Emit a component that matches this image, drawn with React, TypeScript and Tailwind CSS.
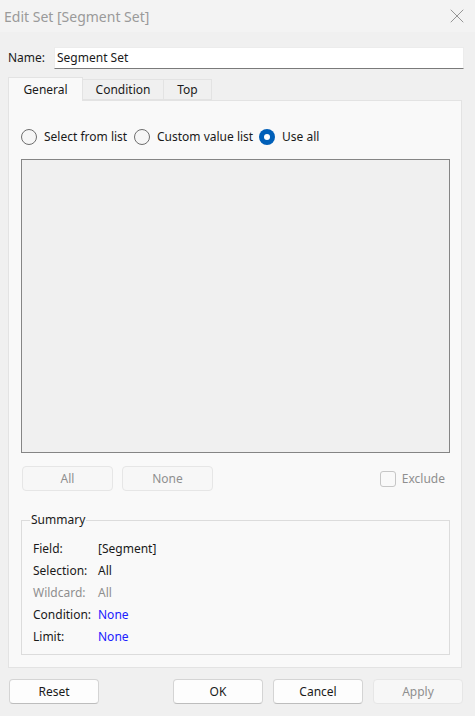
import { X } from "lucide-react";

const font = { fontFamily: '"Noto Sans", "Open Sans", sans-serif' };

function Radio({ label, checked, width }: { label: string; checked?: boolean; width?: string }) {
  return (
    <div className={`flex items-center gap-[7px] ${width ?? ""}`}>
      {checked ? (
        <span className="flex h-[16px] w-[16px] items-center justify-center rounded-full bg-[#005fb8]">
          <span className="h-[6px] w-[6px] rounded-full bg-white" />
        </span>
      ) : (
        <span className="h-[16px] w-[16px] rounded-full border border-[#6e6e6e] bg-[#f6f6f6]" />
      )}
      <span className="text-[12px] text-[#1a1a1a]">{label}</span>
    </div>
  );
}

function Btn({ label, disabled, width = "w-[90px]" }: { label: string; disabled?: boolean; width?: string }) {
  return (
    <div
      className={`flex h-[25px] ${width} items-center justify-center rounded-[4px] border text-[12px] ${
        disabled
          ? "border-[#e6e6e6] bg-[#f7f7f7] text-[#8f8f8f]"
          : "border-[#d4d4d4] border-b-[#bdbdbd] bg-[#fdfdfd] text-[#1a1a1a]"
      }`}
    >
      {label}
    </div>
  );
}

/** 摘要行 */
const SUMMARY = [
  { k: "Field:", v: "[Segment]", tone: "" },
  { k: "Selection:", v: "All", tone: "" },
  { k: "Wildcard:", v: "All", tone: "muted" },
  { k: "Condition:", v: "None", tone: "link" },
  { k: "Limit:", v: "None", tone: "link" },
];

export default function App() {
  return (
    <div style={font} className="flex h-[716px] w-[475px] flex-col bg-[#f0f0f0] text-[12px] text-[#1a1a1a]">
      {/* title bar */}
      <div className="flex h-[32px] items-center justify-between bg-[#f3f3f3] pl-[4px] pr-[6px]">
        <span className="text-[14px] text-[#9a9a9a]">Edit Set [Segment Set]</span>
        <X className="h-[24px] w-[24px] text-[#8a8a8a]" strokeWidth={0.9} />
      </div>

      {/* name */}
      <div className="mt-[15px] flex h-[22px] items-center pl-[8px] pr-[11px]">
        <span className="w-[46px]">Name:</span>
        <div className="flex h-[22px] flex-1 items-center border border-[#ececec] border-b-[#7a7a7a] bg-white pl-[2px] text-[12px]">
          Segment Set
        </div>
      </div>

      {/* tabs */}
      <div className="mt-[8px] flex h-[23px] items-end pl-[8px]">
        <div className="z-10 -mb-px flex h-[24px] w-[75px] items-center justify-center border border-b-0 border-[#e3e3e3] bg-[#f9f9f9]">
          General
        </div>
        <div className="flex h-[21px] w-[81px] items-center justify-center border border-l-0 border-[#e3e3e3] bg-[#f0f0f0]">
          Condition
        </div>
        <div className="flex h-[21px] w-[48px] items-center justify-center border border-l-0 border-[#e3e3e3] bg-[#f0f0f0]">
          Top
        </div>
      </div>

      {/* panel */}
      <div className="ml-[8px] flex h-[568px] w-[454px] flex-col border border-[#e3e3e3] bg-[#f9f9f9] pl-[12px] pr-[11px]">
        <div className="mt-[27px] flex h-[18px] items-center">
          <Radio label="Select from list" width="w-[113px]" />
          <Radio label="Custom value list" width="w-[125px]" />
          <Radio label="Use all" checked />
        </div>

        <div className="mt-[13px] h-[294px] w-full border border-[#858585] bg-[#f0f0f0]" />

        <div className="mt-[12px] flex h-[27px] items-center">
          <div className="ml-[1px] flex gap-[9px]">
            <Btn label="All" disabled width="w-[91px]" />
            <Btn label="None" disabled width="w-[91px]" />
          </div>
          <div className="ml-auto mr-[5px] flex items-center gap-[6px]">
            <span className="h-[16px] w-[16px] rounded-[3px] border border-[#c6c6c6] bg-[#f9f9f9]" />
            <span className="text-[#8f8f8f]">Exclude</span>
          </div>
        </div>

        <fieldset className="mt-[20px] h-[143px] border border-[#dcdcdc]">
          <legend className="ml-[8px] px-[1px] text-[12px] leading-[16px]">Summary</legend>
          <div className="mt-[10px] flex flex-col pl-[11px]">
            {SUMMARY.map((r) => (
              <div key={r.k} className="flex h-[22px] items-center">
                <span className={`w-[65px] ${r.tone === "muted" ? "text-[#8f8f8f]" : ""}`}>{r.k}</span>
                <span
                  className={
                    r.tone === "muted" ? "text-[#8f8f8f]" : r.tone === "link" ? "text-[#2020ff]" : ""
                  }
                >
                  {r.v}
                </span>
              </div>
            ))}
          </div>
        </fieldset>
      </div>

      {/* footer buttons */}
      <div className="mt-[11px] flex items-center pl-[9px] pr-[12px]">
        <Btn label="Reset" />
        <div className="ml-auto flex gap-[10px]">
          <Btn label="OK" />
          <Btn label="Cancel" />
          <Btn label="Apply" disabled />
        </div>
      </div>
    </div>
  );
}
